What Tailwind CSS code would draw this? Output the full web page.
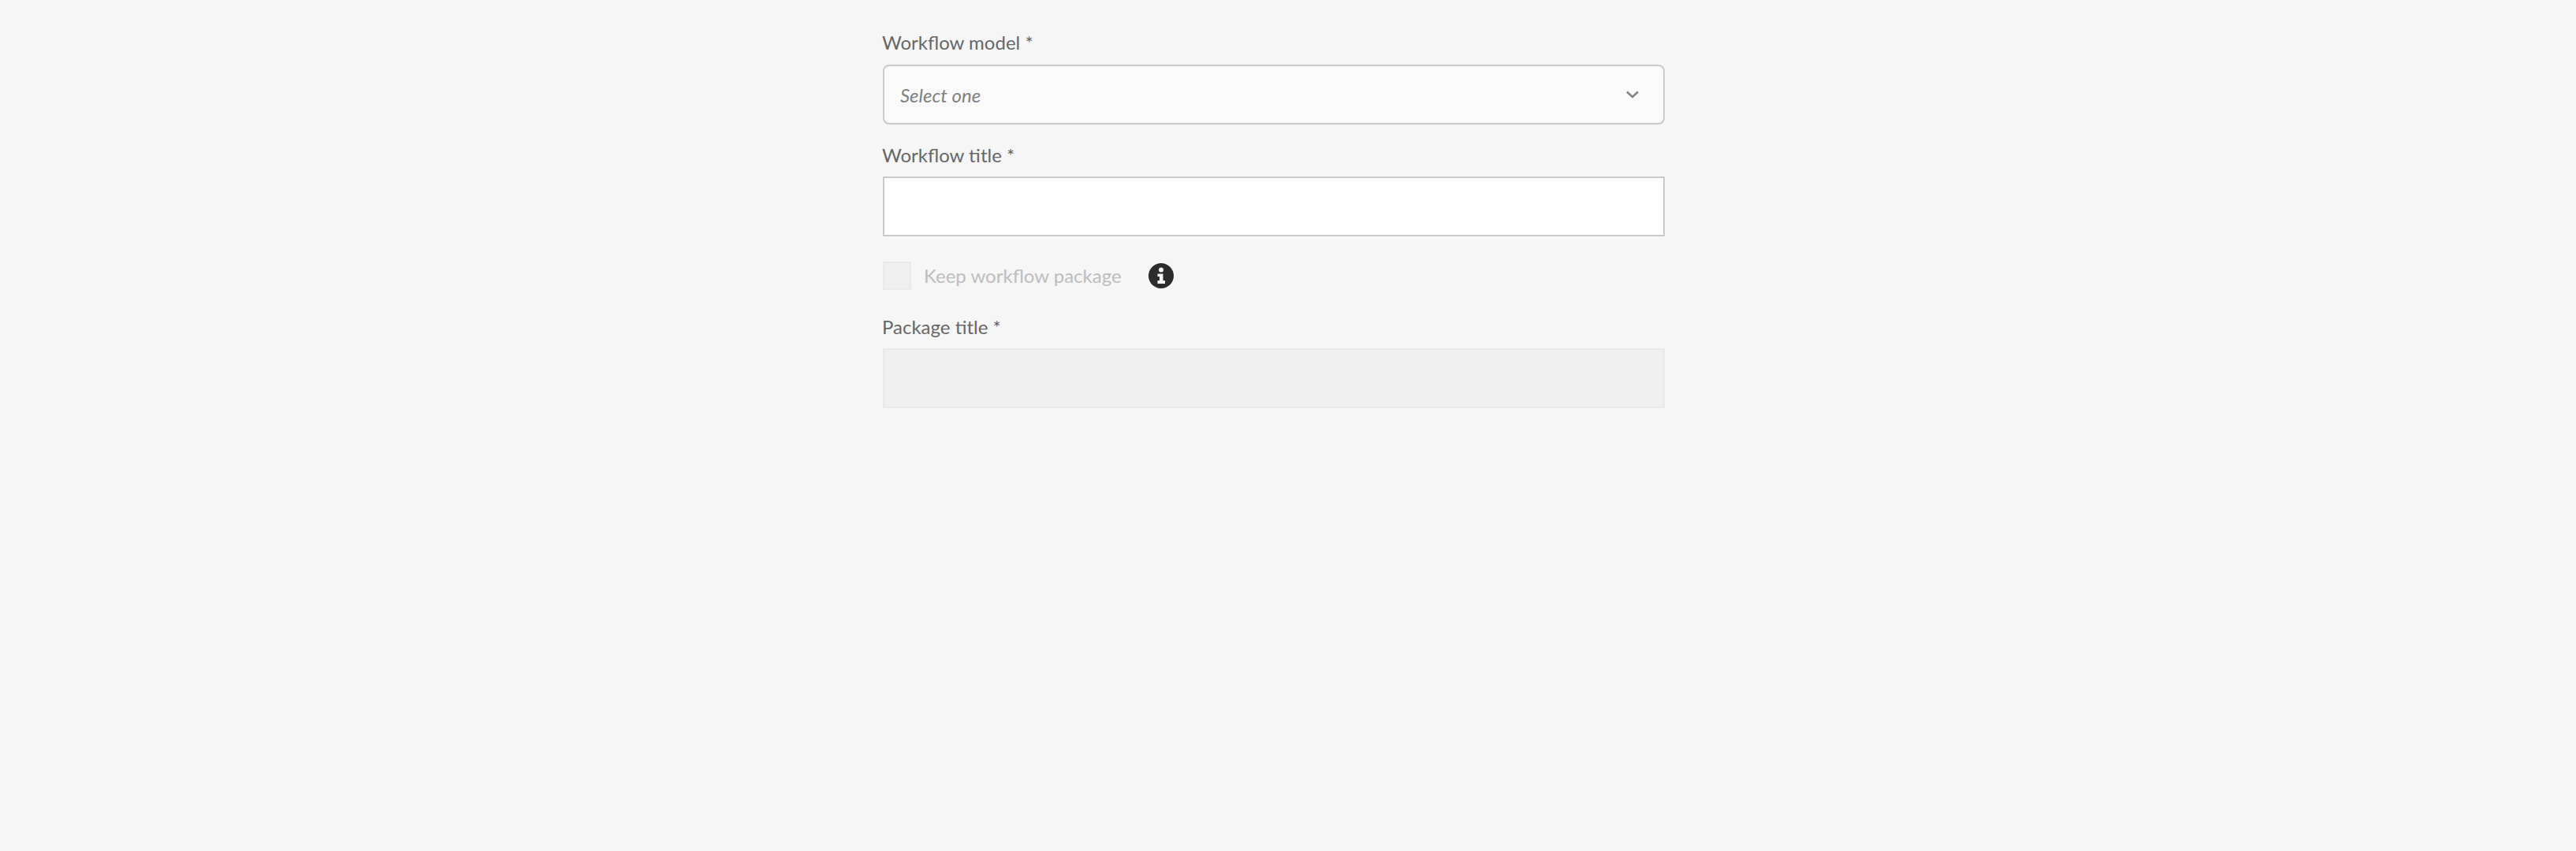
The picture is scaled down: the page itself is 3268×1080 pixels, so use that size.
<!DOCTYPE html>
<html lang="en">
<head>
    <meta charset="UTF-8">
    <meta name="viewport" content="width=device-width, initial-scale=1.0">
    <title>Start Workflow</title>
    <script src="https://cdn.jsdelivr.net/npm/@tailwindcss/browser@4"></script>
</head>
<body class="bg-[#f6f6f6] min-h-screen font-['Lato',sans-serif] text-[24px] text-[#666666]">
    <div class="flex justify-center pr-9 pt-10">
        <form class="w-[992px] flex flex-col">
            <label for="model" class="h-[32px] leading-[32px] -ml-px -mt-[2px] mb-[12px]">Workflow model *</label>
            <div id="model" class="h-[76px] border-2 border-[#cacaca] rounded-[8px] bg-[#fafafa] flex items-center justify-between pl-[20px] pr-[31px]">
                <span class="italic pt-[2px] text-[#808080]">Select one</span>
                <svg width="16" height="10" viewBox="0 0 16 10" fill="none" stroke="#848484" stroke-width="2.6">
                    <path d="M1 1.5 L8 8 L15 1.5"/>
                </svg>
            </div>

            <label for="title" class="h-[32px] leading-[32px] -ml-px mt-[23px] mb-[11px]">Workflow title *</label>
            <input id="title" type="text" class="h-[76px] border-2 border-[#cacaca] bg-white">

            <div class="flex items-center h-[36px] mt-[32px]">
                <span class="w-[36px] h-[36px] border-2 border-[#e9e9e9] bg-[#efefef]"></span>
                <span class="ml-[16px] text-[#bdbdbd]">Keep workflow package</span>
                <svg class="ml-[34px]" width="32" height="32" viewBox="0 0 32 32">
                    <circle cx="16" cy="16" r="16" fill="#2c2c2c"/>
                    <circle cx="16" cy="8.5" r="3" fill="#f6f6f6"/>
                    <path d="M11.5 13.5 H18.5 V22 H21 V26 H11.5 V22 H14 V17 H11.5 Z" fill="#f6f6f6"/>
                </svg>
            </div>

            <label for="package" class="h-[32px] leading-[32px] -ml-px mt-[31px] mb-[11px]">Package title *</label>
            <input id="package" type="text" disabled class="h-[76px] border-2 border-[#e9e9e9] bg-[#efefef]">
        </form>
    </div>
</body>
</html>
